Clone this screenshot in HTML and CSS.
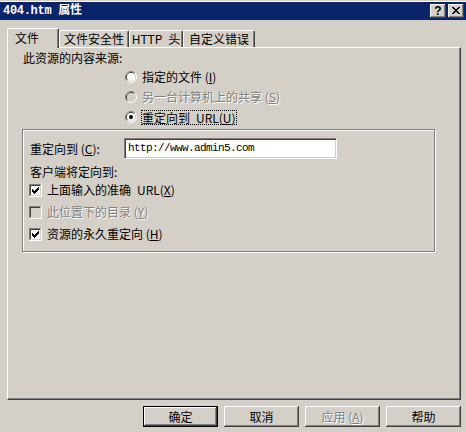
FILE: index.html
```html
<!DOCTYPE html>
<html>
<head>
<meta charset="utf-8">
<link rel="stylesheet" href="styles.css">
</head>
<body>
<div class="window">
  <div class="titlebar">
    <span class="title">404.htm 属性</span>
    <div class="caption-buttons">
      <div class="cap-btn"><span class="help-glyph">?</span></div>
      <div class="cap-btn">
        <svg width="16" height="14" viewBox="0 0 16 14">
          <g fill="#000">
            <rect x="4" y="3" width="2" height="1"/><rect x="10" y="3" width="2" height="1"/>
            <rect x="5" y="4" width="2" height="1"/><rect x="9" y="4" width="2" height="1"/>
            <rect x="6" y="5" width="4" height="1"/>
            <rect x="7" y="6" width="2" height="1"/>
            <rect x="6" y="7" width="4" height="1"/>
            <rect x="5" y="8" width="2" height="1"/><rect x="9" y="8" width="2" height="1"/>
            <rect x="4" y="9" width="2" height="1"/><rect x="10" y="9" width="2" height="1"/>
          </g>
        </svg>
      </div>
    </div>
  </div>

  <div class="tabs">
    <div class="tab active t1">文件</div>
    <div class="tab t2">文件安全性</div>
    <div class="tab t3">HTTP&ensp;头</div>
    <div class="tab t4">自定义错误</div>
  </div>

  <div class="panel">
    <div class="heading">此资源的内容来源:</div>
    <div class="radios">
      <div class="radio-row">
        <svg class="radio" width="12" height="12" viewBox="0 0 12 12">
          <path d="M2.11 9.89 A5.5 5.5 0 0 1 9.89 2.11" fill="none" stroke="#808080"/>
          <path d="M9.89 2.11 A5.5 5.5 0 0 1 2.11 9.89" fill="none" stroke="#fff"/>
          <path d="M2.82 9.18 A4.5 4.5 0 0 1 9.18 2.82" fill="none" stroke="#404040"/>
          <path d="M9.18 2.82 A4.5 4.5 0 0 1 2.82 9.18" fill="none" stroke="#d4d0c8"/>
          <circle cx="6" cy="6" r="4" fill="#fff"/>
        </svg>
        <span class="opt">指定的文件 (<u>I</u>)</span>
      </div>
      <div class="radio-row">
        <svg class="radio" width="12" height="12" viewBox="0 0 12 12">
          <path d="M2.11 9.89 A5.5 5.5 0 0 1 9.89 2.11" fill="none" stroke="#808080"/>
          <path d="M9.89 2.11 A5.5 5.5 0 0 1 2.11 9.89" fill="none" stroke="#fff"/>
          <path d="M2.82 9.18 A4.5 4.5 0 0 1 9.18 2.82" fill="none" stroke="#404040"/>
          <path d="M9.18 2.82 A4.5 4.5 0 0 1 2.82 9.18" fill="none" stroke="#d4d0c8"/>
          <circle cx="6" cy="6" r="4" fill="#d4d0c8"/>
        </svg>
        <span class="opt disabled">另一台计算机上的共享 (<u>S</u>)</span>
      </div>
      <div class="radio-row">
        <svg class="radio" width="12" height="12" viewBox="0 0 12 12">
          <path d="M2.11 9.89 A5.5 5.5 0 0 1 9.89 2.11" fill="none" stroke="#808080"/>
          <path d="M9.89 2.11 A5.5 5.5 0 0 1 2.11 9.89" fill="none" stroke="#fff"/>
          <path d="M2.82 9.18 A4.5 4.5 0 0 1 9.18 2.82" fill="none" stroke="#404040"/>
          <path d="M9.18 2.82 A4.5 4.5 0 0 1 2.82 9.18" fill="none" stroke="#d4d0c8"/>
          <circle cx="6" cy="6" r="4" fill="#fff"/>
          <circle cx="6" cy="6" r="2" fill="#000"/>
        </svg>
        <span class="opt focused">重定向到&ensp;URL(<u>U</u>)</span>
      </div>
    </div>

    <div class="group">
      <div class="field-row">
        <span class="field-label">重定向到 (<u>C</u>):</span>
        <div class="input">http://www.admin5.com</div>
      </div>
      <div class="sub">客户端将定向到:</div>
      <div class="check-row">
        <svg class="cb" width="13" height="13" viewBox="0 0 13 13">
          <rect width="13" height="13" fill="#fff"/>
          <path d="M0 0H12V1H1V12H0Z" fill="#808080"/>
          <path d="M1 1H11V2H2V11H1Z" fill="#404040"/>
          <path d="M11 1H12V12H1V11H11Z" fill="#d4d0c8"/>
          <rect x="2" y="2" width="9" height="9" fill="#fff"/>
          <g fill="#000">
            <rect x="3" y="5" width="1" height="3"/><rect x="4" y="6" width="1" height="3"/>
            <rect x="5" y="7" width="1" height="3"/><rect x="6" y="6" width="1" height="3"/>
            <rect x="7" y="5" width="1" height="3"/><rect x="8" y="4" width="1" height="3"/>
            <rect x="9" y="3" width="1" height="3"/>
          </g>
        </svg>
        <span class="opt">上面输入的准确&ensp;URL(<u>X</u>)</span>
      </div>
      <div class="check-row">
        <svg class="cb" width="13" height="13" viewBox="0 0 13 13">
          <rect width="13" height="13" fill="#fff"/>
          <path d="M0 0H12V1H1V12H0Z" fill="#808080"/>
          <path d="M1 1H11V2H2V11H1Z" fill="#404040"/>
          <path d="M11 1H12V12H1V11H11Z" fill="#d4d0c8"/>
          <rect x="2" y="2" width="9" height="9" fill="#d4d0c8"/>
        </svg>
        <span class="opt disabled">此位置下的目录 (<u>Y</u>)</span>
      </div>
      <div class="check-row">
        <svg class="cb" width="13" height="13" viewBox="0 0 13 13">
          <rect width="13" height="13" fill="#fff"/>
          <path d="M0 0H12V1H1V12H0Z" fill="#808080"/>
          <path d="M1 1H11V2H2V11H1Z" fill="#404040"/>
          <path d="M11 1H12V12H1V11H11Z" fill="#d4d0c8"/>
          <rect x="2" y="2" width="9" height="9" fill="#fff"/>
          <g fill="#000">
            <rect x="3" y="5" width="1" height="3"/><rect x="4" y="6" width="1" height="3"/>
            <rect x="5" y="7" width="1" height="3"/><rect x="6" y="6" width="1" height="3"/>
            <rect x="7" y="5" width="1" height="3"/><rect x="8" y="4" width="1" height="3"/>
            <rect x="9" y="3" width="1" height="3"/>
          </g>
        </svg>
        <span class="opt">资源的永久重定向 (<u>H</u>)</span>
      </div>
    </div>
  </div>

  <div class="buttons">
    <div class="btn default">确定</div>
    <div class="btn">取消</div>
    <div class="btn disabled">应用 (<u>A</u>)</div>
    <div class="btn">帮助</div>
  </div>
</div>
</body>
</html>
```

FILE: styles.css
```css
* { box-sizing: border-box; }
html, body { margin: 0; padding: 0; }
body {
  width: 466px;
  height: 432px;
  overflow: hidden;
  background: #d4d0c8;
  font-family: "Noto Sans CJK SC", "Liberation Sans", sans-serif;
  font-size: 12px;
  line-height: 14px;
  color: #000;
}
.window { padding-top: 1px; height: 432px; }

.titlebar {
  height: 19px;
  border-top: 1px solid #fff;
  background: #0a246a;
  display: flex;
  align-items: center;
  justify-content: space-between;
  padding: 0 2px 0 3px;
}
.title {
  color: #fff;
  font-weight: bold;
  font-family: "Liberation Mono", "Noto Sans CJK SC", monospace;
  font-size: 12px;
  line-height: 14px;
  letter-spacing: -0.3px;
}
.caption-buttons { display: flex; gap: 2px; }
.cap-btn {
  width: 16px;
  height: 14px;
  background: #d4d0c8;
  box-shadow: inset -1px -1px #404040, inset 1px 1px #fff, inset -2px -2px #808080;
  display: flex;
  align-items: center;
  justify-content: center;
}
.cap-btn svg { display: block; }
.help-glyph {
  font-family: "Liberation Sans", sans-serif;
  font-weight: bold;
  font-size: 12px;
  line-height: 12px;
  margin-top: -1px;
}

.tabs {
  display: flex;
  align-items: flex-end;
  margin-top: 8px;
  padding-left: 7px;
  height: 19px;
}
.tab {
  height: 17px;
  background: #d4d0c8;
  border-top: 1px solid #fff;
  border-left: 1px solid #fff;
  border-right: 1px solid #404040;
  box-shadow: inset -1px 0 #808080;
  border-radius: 2px 2px 0 0;
  display: flex;
  justify-content: center;
  padding-top: 1px;
  line-height: 14px;
  white-space: nowrap;
}
.tab.active {
  height: 20px;
  margin-bottom: -1px;
  position: relative;
  z-index: 1;
  padding-top: 2px;
  justify-content: flex-start;
  padding-left: 7px;
}
.t1 { width: 52px; }
.t2 { width: 70px; }
.t3 { width: 54px; }
.t4 { width: 72px; }

.panel {
  margin-left: 7px;
  width: 454px;
  height: 353px;
  border-top: 1px solid #fff;
  border-left: 1px solid #fff;
  border-right: 1px solid #404040;
  border-bottom: 1px solid #404040;
  box-shadow: inset -1px -1px #808080;
}
.heading { margin-left: 15px; padding-top: 3px; line-height: 14px; }

.radios { margin: 2px 0 0 117px; }
.radio-row { height: 20px; display: flex; align-items: center; }
.radio { display: block; flex: none; }
.radio-row .opt { margin-left: 5px; }
.radio-row .opt.focused {
  margin-left: 4px;
  border: 1px dotted #000;
  line-height: 13px;
}

.opt { white-space: nowrap; }
.disabled { color: #808080; text-shadow: 1px 1px 0 #fff; }
u { text-decoration: underline; text-underline-offset: 1px; }

.group {
  margin: 2px 0 0 14px;
  width: 413px;
  border: 1px solid #808080;
  box-shadow: 1px 1px 0 #fff, inset 1px 1px 0 #fff;
  padding: 8px 0 6px 6px;
}
.field-row { display: flex; align-items: center; height: 21px; }
.field-label { width: 95px; padding-left: 1px; white-space: nowrap; }
.input {
  width: 213px;
  height: 21px;
  background: #fff;
  border-top: 1px solid #808080;
  border-left: 1px solid #808080;
  border-right: 1px solid #fff;
  border-bottom: 1px solid #fff;
  box-shadow: inset 1px 1px #404040, inset -1px -1px #d4d0c8;
  font-family: "Liberation Mono", monospace;
  font-size: 11px;
  letter-spacing: -0.6px;
  line-height: 19px;
  padding-left: 3px;
  white-space: nowrap;
}
.sub { margin: 6px 0 0 1px; line-height: 14px; }
.check-row { height: 22px; display: flex; align-items: center; }
.cb { display: block; flex: none; }
.check-row .opt { margin-left: 5px; }

.buttons {
  display: flex;
  justify-content: flex-end;
  gap: 6px;
  margin-top: 6px;
  padding-right: 5px;
}
.btn {
  width: 75px;
  height: 21px;
  display: flex;
  align-items: center;
  justify-content: center;
  background: #d4d0c8;
  box-shadow: inset -1px -1px #404040, inset 1px 1px #fff, inset -2px -2px #808080;
  white-space: nowrap;
}
.btn.default { border: 1px solid #000; }
```
